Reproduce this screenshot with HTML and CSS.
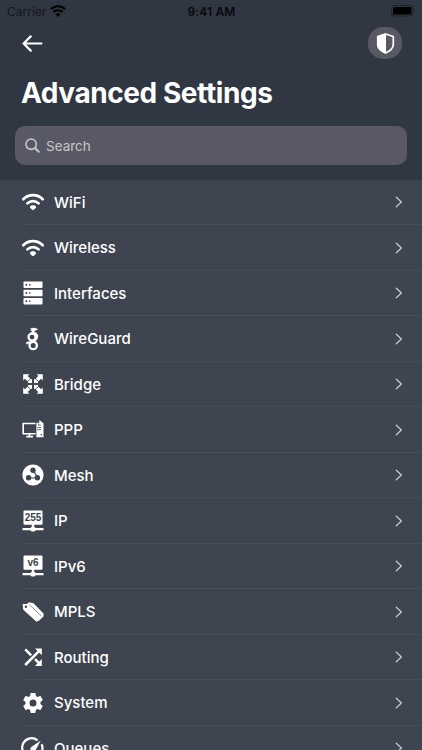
FILE: index.html
```html
<!DOCTYPE html>
<html lang="en">
<head>
    <meta charset="UTF-8">
    <meta name="viewport" content="width=device-width, initial-scale=1.0">
    <title>Advanced Settings</title>
    <link rel="stylesheet" href="styles.css">
</head>
<body>
    <svg class="defs" width="0" height="0">
        <symbol id="wifi" viewBox="0 0 24 24">
            <g fill="none" stroke="currentColor" stroke-width="3.2">
                <path d="M1.5 9.2C7.5 3.4 16.5 3.4 22.5 9.2"/>
                <path d="M5.2 13.5C9 9.9 15 9.9 18.8 13.5"/>
            </g>
            <path d="M8 17C10.2 14.9 13.8 14.9 16 17L12 21Z" fill="currentColor"/>
        </symbol>
        <symbol id="wifi-row" viewBox="0 0 24 24">
            <g fill="none" stroke="currentColor" stroke-width="2.7" stroke-linecap="round">
                <path d="M2.3 9.2C7.7 3.8 16.3 3.8 21.7 9.2"/>
                <path d="M6.4 13.4C9.6 10.3 14.4 10.3 17.6 13.4"/>
            </g>
            <path d="M9 17.2C9 14.6 15 14.6 15 17.2Q14.4 18.8 12 20.3Q9.6 18.8 9 17.2Z" fill="currentColor"/>
        </symbol>
        <symbol id="chevron" viewBox="0 0 8 12">
            <path d="M1.3 1.2L6.4 6L1.3 10.8" fill="none" stroke="currentColor" stroke-width="1.3" stroke-linecap="round" stroke-linejoin="round"/>
        </symbol>
    </svg>

    <header class="header">
        <div class="status">
            <div class="carrier">Carrier <svg class="signal"><use href="#wifi"/></svg></div>
            <div class="time">9:41 AM</div>
            <svg class="battery" viewBox="0 0 25 12">
                <rect x=".5" y=".5" width="21.5" height="10.5" rx="3" fill="none" stroke="#1d2027"/>
                <rect x="2" y="2" width="18.5" height="7.5" rx="1.6"/>
                <path d="M23.3 4Q24.7 5.7 23.3 7.5Z" fill="#1d2027"/>
            </svg>
        </div>
        <div class="nav">
            <svg class="back" viewBox="0 0 20 16"><path d="M18.5 8H1.5M8.3 1.2L1.5 8L8.3 14.8" fill="none" stroke="#fff" stroke-width="2.1" stroke-linecap="round" stroke-linejoin="round"/></svg>
            <div class="shield">
                <svg viewBox="0 0 18 20"><path d="M9 1L16.4 3.4V11C16.4 14.7 13 17.3 9 19C5 17.3 1.6 14.7 1.6 11V3.4Z" fill="none" stroke="#fff" stroke-width="1.6" stroke-linejoin="round"/><path d="M9.5 .5L1 3.2V11C1 15 4.5 18 9.5 19.8Z" fill="#fff"/></svg>
            </div>
        </div>
        <h1>Advanced Settings</h1>
        <div class="search">
            <svg viewBox="0 0 16 16"><circle cx="6.6" cy="6.6" r="5.5" fill="none" stroke="currentColor" stroke-width="1.7"/><path d="M10.9 10.9L14.6 14.6" stroke="currentColor" stroke-width="2.3" stroke-linecap="round"/></svg>
            <span>Search</span>
        </div>
    </header>

    <main class="list">
        <div class="row">
            <svg class="icon"><use href="#wifi-row"/></svg>
            <div class="label">WiFi<svg class="chevron"><use href="#chevron"/></svg></div>
        </div>
        <div class="row">
            <svg class="icon"><use href="#wifi-row"/></svg>
            <div class="label">Wireless<svg class="chevron"><use href="#chevron"/></svg></div>
        </div>
        <div class="row">
            <svg class="icon" viewBox="0 0 24 24">
                <g fill="currentColor"><rect x="2.5" y=".5" width="19" height="6.5" rx=".7"/><rect x="2.5" y="8.7" width="19" height="6.5" rx=".7"/><rect x="2.5" y="17" width="19" height="6.5" rx=".7"/></g>
                <g fill="#3e4450"><circle cx="5.4" cy="3.8" r="1"/><rect x="8.2" y="2.9" width="1.2" height="1.8"/><circle cx="5.4" cy="12" r="1"/><rect x="8.2" y="11.1" width="1.2" height="1.8"/><circle cx="5.4" cy="20.2" r="1"/><rect x="8.2" y="19.3" width="1.2" height="1.8"/></g>
            </svg>
            <div class="label">Interfaces<svg class="chevron"><use href="#chevron"/></svg></div>
        </div>
        <div class="row">
            <svg class="icon" viewBox="0 0 24 24">
                <path d="M8.8 1.7L12 .7L15.2 1.2L17.1 2.8L14.4 3.5L13 4.4L15.3 5.7Q17.5 7.3 16.8 10L14.4 11.5L13.6 7.5L9.3 6.4L11.2 4.2L9 3.3L10.7 2.5Z" fill="currentColor"/>
                <circle cx="11" cy="10.1" r="3.5" fill="none" stroke="currentColor" stroke-width="2.2"/>
                <circle cx="12.2" cy="18.5" r="3.7" fill="none" stroke="currentColor" stroke-width="2.3"/>
                <path d="M16.2 8Q16.6 12.4 12.5 14.1L8.4 15.5M8.2 15.2L5.3 16.5" fill="none" stroke="currentColor" stroke-width="2"/>
            </svg>
            <div class="label">WireGuard<svg class="chevron"><use href="#chevron"/></svg></div>
        </div>
        <div class="row">
            <svg class="icon" viewBox="0 0 24 24">
                <g fill="currentColor">
                    <g id="arrow"><path d="M2.2 2.200H8.400L6.700 3.900L9.200 6.400L6.400 9.200L3.900 6.700L2.200 8.400ZM11 6.900V11H6.900L7.300 9.300L9.300 7.300Z"/></g>
                    <use href="#arrow" transform="rotate(90 12 12)"/>
                    <use href="#arrow" transform="rotate(180 12 12)"/>
                    <use href="#arrow" transform="rotate(270 12 12)"/>
                </g>
            </svg>
            <div class="label">Bridge<svg class="chevron"><use href="#chevron"/></svg></div>
        </div>
        <div class="row">
            <svg class="icon" viewBox="0 0 24 24">
                <path d="M14.5 5.5H2.200V15.700H14.500M8.500 16V18.300M5.300 18.600H12" fill="none" stroke="currentColor" stroke-width="1.6"/>
                <path d="M15.400 4.800H18.300V2.100L21.500 4.500L22.500 5.500V19.300H15.400Z" fill="currentColor"/>
                <g stroke="#3e4450" fill="none" stroke-width=".8"><path d="M16.200 9.600H20M16.200 11.700H20M17.500 5.500V7.100H19.800"/></g>
                <circle cx="20.300" cy="16.800" r=".8" fill="#3e4450"/>
            </svg>
            <div class="label">PPP<svg class="chevron"><use href="#chevron"/></svg></div>
        </div>
        <div class="row">
            <svg class="icon" viewBox="0 0 24 24">
                <circle cx="12" cy="12" r="10.600" fill="currentColor"/>
                <path d="M12 7.500L14 10.200L16.600 15H7.600" fill="none" stroke="#3e4450" stroke-width="1.200"/>
                <g fill="#3e4450"><circle cx="12" cy="7.300" r="2.700"/><circle cx="7.600" cy="14.800" r="2.700"/><circle cx="16.400" cy="14.800" r="2.700"/></g>
            </svg>
            <div class="label">Mesh<svg class="chevron"><use href="#chevron"/></svg></div>
        </div>
        <div class="row">
            <svg class="icon" viewBox="0 0 24 24">
                <path d="M3.400 1.500H20.600Q21.500 1.500 21.500 2.400V14.800Q21.500 15.700 20.600 15.700H13.200V17.800L14.700 19H22.500V21.300H14.700L13.300 22.500H10.700L9.300 21.300H1.500V19H9.300L10.800 17.800V15.700H3.400Q2.500 15.700 2.500 14.800V2.400Q2.500 1.500 3.400 1.500Z" fill="currentColor"/>
                <text class="badge" x="12" y="12.200" text-anchor="middle">255</text>
            </svg>
            <div class="label">IP<svg class="chevron"><use href="#chevron"/></svg></div>
        </div>
        <div class="row">
            <svg class="icon" viewBox="0 0 24 24">
                <path d="M3.400 1.500H20.600Q21.500 1.500 21.500 2.400V14.800Q21.500 15.700 20.600 15.700H13.200V17.800L14.700 19H22.500V21.300H14.700L13.300 22.500H10.700L9.300 21.300H1.500V19H9.300L10.800 17.800V15.700H3.400Q2.500 15.700 2.500 14.800V2.400Q2.500 1.500 3.400 1.500Z" fill="currentColor"/>
                <text class="badge" x="12" y="12.200" text-anchor="middle">v6</text>
            </svg>
            <div class="label">IPv6<svg class="chevron"><use href="#chevron"/></svg></div>
        </div>
        <div class="row">
            <svg class="icon" viewBox="0 0 24 24">
                <path d="M6 3.800L8.200 2.200L12.500 3.300L22.500 13.400V16.500L17 21.500L10 13Z" fill="currentColor"/>
                <path d="M2.100 4.300L7.400 4.700L20.200 16.800L15.500 21.300L2.700 9.600Z" fill="currentColor" stroke="currentColor" stroke-width="1" stroke-linejoin="round"/>
                <path d="M8.300 4.500L20.600 16.300" stroke="#3e4450" stroke-width=".6"/>
                <circle cx="4.900" cy="6.800" r="1.200" fill="#3e4450"/>
            </svg>
            <div class="label">MPLS<svg class="chevron"><use href="#chevron"/></svg></div>
        </div>
        <div class="row">
            <svg class="icon" viewBox="0 0 24 24">
                <path d="M4.200 20L18.500 5.700M4.200 4.300L10.200 10.300M14 14.100L18.500 18.600" fill="none" stroke="currentColor" stroke-width="2.500"/>
                <path d="M14 3.500H20.800V10.300ZM20.800 14.100V20.900H14Z" fill="currentColor"/>
            </svg>
            <div class="label">Routing<svg class="chevron"><use href="#chevron"/></svg></div>
        </div>
        <div class="row">
            <svg class="icon" viewBox="0 0 24 24">
                <path d="M12 15.500A3.500 3.500 0 0 1 8.500 12 3.500 3.500 0 0 1 12 8.500A3.500 3.500 0 0 1 15.500 12 3.500 3.500 0 0 1 12 15.500M19.430 12.970C19.470 12.650 19.500 12.330 19.500 12S19.470 11.340 19.430 11L21.540 9.370C21.730 9.220 21.780 8.950 21.660 8.730L19.660 5.270C19.540 5.050 19.270 4.960 19.050 5.050L16.560 6.050C16.040 5.660 15.500 5.320 14.870 5.070L14.500 2.420C14.460 2.180 14.250 2 14 2H10C9.750 2 9.540 2.180 9.500 2.420L9.130 5.070C8.500 5.320 7.960 5.660 7.440 6.050L4.950 5.050C4.730 4.960 4.460 5.050 4.340 5.270L2.340 8.730C2.210 8.950 2.270 9.220 2.460 9.370L4.570 11C4.530 11.340 4.500 11.670 4.500 12S4.530 12.650 4.570 12.970L2.460 14.630C2.270 14.780 2.210 15.050 2.340 15.270L4.340 18.730C4.460 18.950 4.730 19.030 4.950 18.950L7.440 17.940C7.960 18.340 8.500 18.680 9.130 18.930L9.500 21.580C9.540 21.820 9.750 22 10 22H14C14.250 22 14.460 21.820 14.500 21.580L14.870 18.930C15.500 18.670 16.040 18.340 16.560 17.940L19.050 18.950C19.270 19.030 19.540 18.950 19.660 18.730L21.660 15.270C21.780 15.050 21.730 14.780 21.540 14.630Z" fill="currentColor"/>
            </svg>
            <div class="label">System<svg class="chevron"><use href="#chevron"/></svg></div>
        </div>
        <div class="row">
            <svg class="icon" viewBox="0 0 24 24">
                <path d="M16.500 4.400A9.300 9.300 0 1 0 6.300 19.800H17.700A9.300 9.300 0 0 0 20.600 8.300" fill="none" stroke="currentColor" stroke-width="2.200"/>
                <path d="M19.700 4.500L14.300 14.700Q12 17 10 15.100Q8.500 13.100 10.400 11Z" fill="currentColor"/>
            </svg>
            <div class="label">Queues<svg class="chevron"><use href="#chevron"/></svg></div>
        </div>
    </main>
</body>
</html>
```
FILE: styles.css
```css
* { box-sizing: border-box; }
body { margin: 0; height: 750px; overflow: hidden; background: #3e4450; color: #fff; font-family: Inter, "Liberation Sans", sans-serif; }
svg { display: block; flex: none; }
.defs { position: absolute; }

.header { height: 179.5px; background: #303642; }
.status { display: grid; grid-template-columns: 1fr auto 1fr; align-items: center; height: 22px; padding: 0 6px 0 7px; color: #08090c; font-size: 12px; }
.carrier { display: flex; align-items: center; gap: 4px; letter-spacing: 0; color: #15171c; }
.signal { width: 16px; height: 16px; color: #000; }
.time { font-weight: 600; letter-spacing: 0.15px; }
.battery { width: 25px; height: 12px; justify-self: end; }

.nav { display: flex; justify-content: space-between; align-items: center; height: 42px; padding: 0 20px 0 22px; }
.back { width: 21px; height: 17px; }
.shield { display: flex; align-items: center; justify-content: center; width: 34px; height: 32px; border-radius: 15px; background: #585965; }
.shield svg { width: 19px; height: 21px; }
h1 { margin: 9px 0 0 21px; font-size: 28px; line-height: 40px; font-weight: 700; letter-spacing: -0.43px; }

.search { display: flex; align-items: center; gap: 6px; height: 39px; margin: 13px 15px 0; padding-left: 10px; border-radius: 10px; background: #585965; color: #c5c5cb; font-size: 13.5px; }
.search svg { width: 15px; height: 15px; }

.row { display: flex; align-items: center; gap: 9px; height: 45.5px; padding-left: 21px; background: linear-gradient(#484e59, #484e59) 21px 100% / 100% 1px no-repeat; }
.icon { width: 24px; height: 24px; }
.label { flex: 1; display: flex; align-items: center; justify-content: space-between; padding-right: 19px; font-size: 15px; font-weight: 500; }
.chevron { width: 8px; height: 12px; color: #c6c8cd; }
.badge { font: 700 10px "Liberation Sans", sans-serif; fill: #3e4450; }
```
